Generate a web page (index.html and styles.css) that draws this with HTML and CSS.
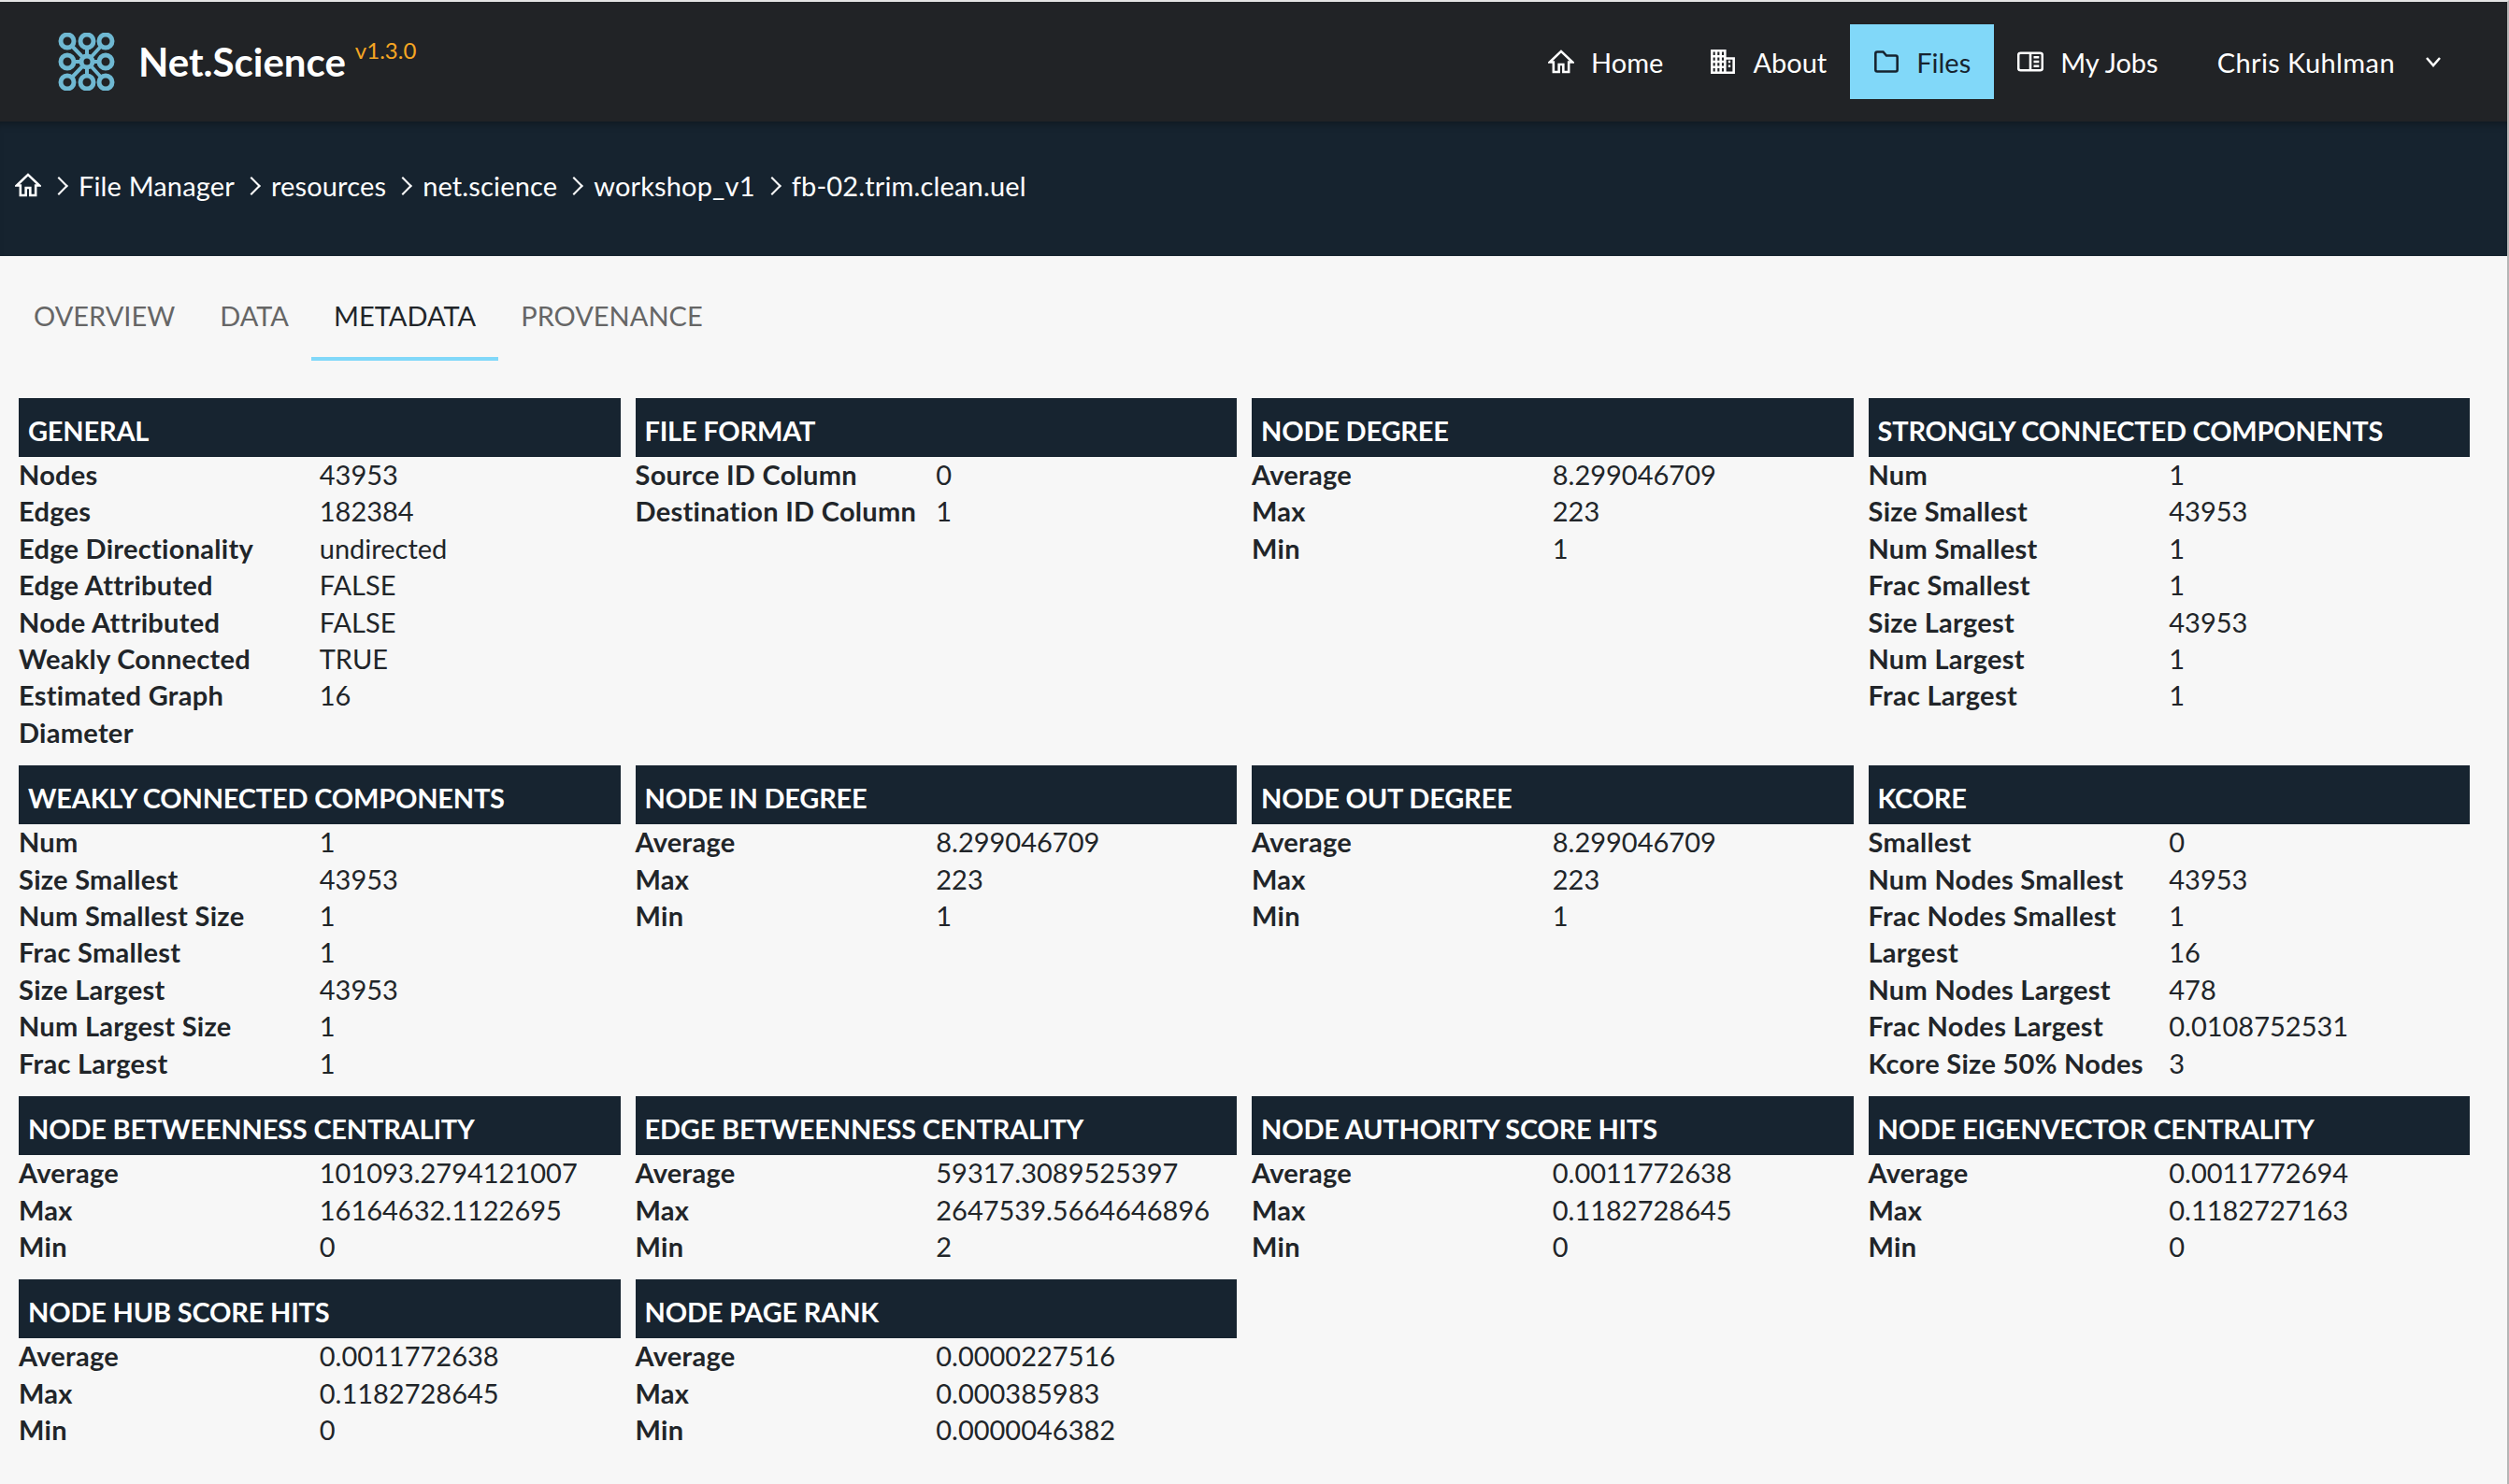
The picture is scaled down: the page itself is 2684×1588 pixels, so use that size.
FILE: index.html
```html
<!DOCTYPE html>
<html>
	<head>
		<meta charset="utf-8" />
		<title>Net.Science</title>
		<link rel="stylesheet" href="styles.css">
	</head>
	<body>
		<nav class="topbar">
			<a class="brand">
				<svg class="brand-logo" viewBox="0 0 62 62">
					<g class="logo-lines">
						<path d="M31 31L10 9M31 31L31 9M31 31L51 9M31 31L10 31M31 31L51 31M31 31L10 53M31 31L31 53M31 31L51 53" />
					</g>
					<g class="logo-rings">
						<circle cx="10" cy="9" r="7" />
						<circle cx="31" cy="9" r="7" />
						<circle cx="51" cy="9" r="7" />
						<circle cx="10" cy="31" r="7" />
						<circle cx="31" cy="31" r="6" />
						<circle cx="51" cy="31" r="7" />
						<circle cx="10" cy="53" r="7" />
						<circle cx="31" cy="53" r="7" />
						<circle cx="51" cy="53" r="7" />
					</g>
				</svg>
				<span class="brand-name">Net.Science</span>
				<span class="brand-version">v1.3.0</span>
			</a>
			<ul class="nav-links">
				<li class="nav-item">
					<svg class="icon" viewBox="0 0 24 24"><path d="M12 2.5L1.5 12.5H5V21.5H10V14.5H14V21.5H19V12.5H22.5Z" /></svg>
					Home
				</li>
				<li class="nav-item">
					<svg class="icon" viewBox="0 0 24 24"><path d="M2 2H14V22H2ZM14 9H22V22H14ZM6 2V22M10 2V22M2 7H14M2 12H14M2 17H14M17 12H19M17 16H19" /></svg>
					About
				</li>
				<li class="nav-item nav-active">
					<svg class="icon" viewBox="0 0 24 24"><path d="M2 4.5Q2 3 3.5 3H9L12 6.5H20.5Q22 6.5 22 8V19.5Q22 21 20.5 21H3.5Q2 21 2 19.5Z" /></svg>
					Files
				</li>
				<li class="nav-item">
					<svg class="icon" viewBox="0 0 24 24"><path d="M3 4H21Q23 4 23 6V18Q23 20 21 20H3Q1 20 1 18V6Q1 4 3 4ZM12 4V20M15 8H20M15 12H20M15 16H20" /></svg>
					My Jobs
				</li>
				<li class="nav-user">
					Chris Kuhlman
					<svg class="user-caret" viewBox="0 0 18 12"><path d="M2 2L9 10L16 2" /></svg>
				</li>
			</ul>
		</nav>

		<header class="banner">
			<svg class="icon crumb-home" viewBox="0 0 24 24"><path d="M12 2.5L1.5 12.5H5V21.5H10V14.5H14V21.5H19V12.5H22.5Z" /></svg>
			<span class="crumb">File Manager</span>
			<span class="crumb">resources</span>
			<span class="crumb">net.science</span>
			<span class="crumb">workshop_v1</span>
			<span class="crumb">fb-02.trim.clean.uel</span>
		</header>

		<main class="content">
			<ul class="tabs">
				<li class="tab">OVERVIEW</li>
				<li class="tab">DATA</li>
				<li class="tab tab-active">METADATA</li>
				<li class="tab">PROVENANCE</li>
			</ul>

			<div class="panels">
				<section class="panel">
					<h2 class="panel-title">GENERAL</h2>
					<dl class="panel-list">
						<dt>Nodes</dt><dd>43953</dd>
						<dt>Edges</dt><dd>182384</dd>
						<dt>Edge Directionality</dt><dd>undirected</dd>
						<dt>Edge Attributed</dt><dd>FALSE</dd>
						<dt>Node Attributed</dt><dd>FALSE</dd>
						<dt>Weakly Connected</dt><dd>TRUE</dd>
						<dt>Estimated Graph Diameter</dt><dd>16</dd>
					</dl>
				</section>
				<section class="panel">
					<h2 class="panel-title">FILE FORMAT</h2>
					<dl class="panel-list">
						<dt>Source ID Column</dt><dd>0</dd>
						<dt>Destination ID Column</dt><dd>1</dd>
					</dl>
				</section>
				<section class="panel">
					<h2 class="panel-title">NODE DEGREE</h2>
					<dl class="panel-list">
						<dt>Average</dt><dd>8.299046709</dd>
						<dt>Max</dt><dd>223</dd>
						<dt>Min</dt><dd>1</dd>
					</dl>
				</section>
				<section class="panel">
					<h2 class="panel-title">STRONGLY CONNECTED COMPONENTS</h2>
					<dl class="panel-list">
						<dt>Num</dt><dd>1</dd>
						<dt>Size Smallest</dt><dd>43953</dd>
						<dt>Num Smallest</dt><dd>1</dd>
						<dt>Frac Smallest</dt><dd>1</dd>
						<dt>Size Largest</dt><dd>43953</dd>
						<dt>Num Largest</dt><dd>1</dd>
						<dt>Frac Largest</dt><dd>1</dd>
					</dl>
				</section>

				<section class="panel">
					<h2 class="panel-title">WEAKLY CONNECTED COMPONENTS</h2>
					<dl class="panel-list">
						<dt>Num</dt><dd>1</dd>
						<dt>Size Smallest</dt><dd>43953</dd>
						<dt>Num Smallest Size</dt><dd>1</dd>
						<dt>Frac Smallest</dt><dd>1</dd>
						<dt>Size Largest</dt><dd>43953</dd>
						<dt>Num Largest Size</dt><dd>1</dd>
						<dt>Frac Largest</dt><dd>1</dd>
					</dl>
				</section>
				<section class="panel">
					<h2 class="panel-title">NODE IN DEGREE</h2>
					<dl class="panel-list">
						<dt>Average</dt><dd>8.299046709</dd>
						<dt>Max</dt><dd>223</dd>
						<dt>Min</dt><dd>1</dd>
					</dl>
				</section>
				<section class="panel">
					<h2 class="panel-title">NODE OUT DEGREE</h2>
					<dl class="panel-list">
						<dt>Average</dt><dd>8.299046709</dd>
						<dt>Max</dt><dd>223</dd>
						<dt>Min</dt><dd>1</dd>
					</dl>
				</section>
				<section class="panel">
					<h2 class="panel-title">KCORE</h2>
					<dl class="panel-list">
						<dt>Smallest</dt><dd>0</dd>
						<dt>Num Nodes Smallest</dt><dd>43953</dd>
						<dt>Frac Nodes Smallest</dt><dd>1</dd>
						<dt>Largest</dt><dd>16</dd>
						<dt>Num Nodes Largest</dt><dd>478</dd>
						<dt>Frac Nodes Largest</dt><dd>0.0108752531</dd>
						<dt>Kcore Size 50% Nodes</dt><dd>3</dd>
					</dl>
				</section>

				<section class="panel">
					<h2 class="panel-title">NODE BETWEENNESS CENTRALITY</h2>
					<dl class="panel-list">
						<dt>Average</dt><dd>101093.2794121007</dd>
						<dt>Max</dt><dd>16164632.1122695</dd>
						<dt>Min</dt><dd>0</dd>
					</dl>
				</section>
				<section class="panel">
					<h2 class="panel-title">EDGE BETWEENNESS CENTRALITY</h2>
					<dl class="panel-list">
						<dt>Average</dt><dd>59317.3089525397</dd>
						<dt>Max</dt><dd>2647539.5664646896</dd>
						<dt>Min</dt><dd>2</dd>
					</dl>
				</section>
				<section class="panel">
					<h2 class="panel-title">NODE AUTHORITY SCORE HITS</h2>
					<dl class="panel-list">
						<dt>Average</dt><dd>0.0011772638</dd>
						<dt>Max</dt><dd>0.1182728645</dd>
						<dt>Min</dt><dd>0</dd>
					</dl>
				</section>
				<section class="panel">
					<h2 class="panel-title">NODE EIGENVECTOR CENTRALITY</h2>
					<dl class="panel-list">
						<dt>Average</dt><dd>0.0011772694</dd>
						<dt>Max</dt><dd>0.1182727163</dd>
						<dt>Min</dt><dd>0</dd>
					</dl>
				</section>

				<section class="panel">
					<h2 class="panel-title">NODE HUB SCORE HITS</h2>
					<dl class="panel-list">
						<dt>Average</dt><dd>0.0011772638</dd>
						<dt>Max</dt><dd>0.1182728645</dd>
						<dt>Min</dt><dd>0</dd>
					</dl>
				</section>
				<section class="panel">
					<h2 class="panel-title">NODE PAGE RANK</h2>
					<dl class="panel-list">
						<dt>Average</dt><dd>0.0000227516</dd>
						<dt>Max</dt><dd>0.000385983</dd>
						<dt>Min</dt><dd>0.0000046382</dd>
					</dl>
				</section>
			</div>
		</main>
	</body>
</html>
```

FILE: styles.css
```css
*{
	margin: 0;
	padding: 0;
	box-sizing: border-box;
}

html,body{
	width: 100%;
	height: 100%;
	overflow: hidden;
}

body{
	font-family: "Lato", "Open Sans", sans-serif;
	font-size: 29px;
	color: #212529;
	background-color: #f7f7f7;
	border-top: 2px solid #e4e4e4;
	border-right: 2px solid #b5b5b5;
}

ul{
	list-style: none;
}

.icon{
	width: 28px;
	height: 28px;
	flex: none;
	fill: none;
	stroke: currentColor;
	stroke-width: 2.2;
}

/* top navigation */
.topbar{
	display: flex;
	align-items: center;
	justify-content: space-between;
	height: 128px;
	padding: 0 70px 0 62px;
	color: #fff;
	background-color: #212326;
}

.brand{
	display: flex;
	align-items: center;
}

.brand-logo{
	width: 62px;
	height: 62px;
	margin-right: 24px;
}

.logo-lines path{
	fill: none;
	stroke: #6fb8d2;
	stroke-width: 4;
}

.logo-rings circle{
	fill: #212326;
	stroke: #6fb8d2;
	stroke-width: 5;
}

.brand-name{
	font-size: 42px;
	font-weight: 700;
}

.brand-version{
	align-self: flex-start;
	margin: 4px 0 0 10px;
	font-size: 24px;
	color: #f5a623;
}

.nav-links{
	display: flex;
	align-items: center;
}

.nav-item{
	display: flex;
	align-items: center;
	gap: 18px;
	height: 80px;
	padding: 0 25px;
}

.nav-active{
	color: #16232f;
	background-color: #81d8f9;
}

.nav-user{
	display: flex;
	align-items: center;
	margin-left: 38px;
	letter-spacing: 0.4px;
}

.user-caret{
	width: 18px;
	height: 12px;
	margin-left: 32px;
	fill: none;
	stroke: #fff;
	stroke-width: 2.5;
}

/* breadcrumb */
.banner{
	display: flex;
	align-items: center;
	height: 144px;
	padding: 0 0 8px 16px;
	color: #fff;
	background-color: #16232f;
	box-shadow: inset 0 8px 8px -6px rgba(0,0,0,0.35);
}

.crumb-home{
	margin-right: 4px;
}

.crumb{
	margin-right: 3px;
	letter-spacing: 0.15px;
}

.crumb::before{
	content: "";
	display: inline-block;
	width: 12px;
	height: 12px;
	margin: 0 14px 4px 8px;
	border-top: 2px solid #fff;
	border-right: 2px solid #fff;
	transform: rotate(45deg);
}

/* tabs */
.content{
	padding: 0 40px 0 20px;
}

.tabs{
	display: flex;
	margin-left: -8px;
	height: 112px;
	padding-top: 16px;
}

.tab{
	height: 96px;
	padding: 0 24px;
	line-height: 96px;
	color: #666;
}

.tab-active{
	color: #212529;
	border-bottom: 4px solid #81d8f9;
}

/* metadata panels */
.panels{
	display: grid;
	grid-template-columns: repeat(4, 1fr);
	gap: 16px;
	margin-top: 40px;
}

.panel-title{
	height: 63px;
	margin-bottom: -1px;
	padding: 15px 10px 0;
	font-size: 29px;
	font-weight: 700;
	line-height: 40px;
	letter-spacing: -0.2px;
	color: #fff;
	background-color: #172430;
}

.panel-list{
	display: grid;
	grid-template-columns: 1fr 1fr;
	line-height: 39.4px;
}

.panel-list dt{
	font-weight: 700;
	letter-spacing: 0.28px;
}
```
